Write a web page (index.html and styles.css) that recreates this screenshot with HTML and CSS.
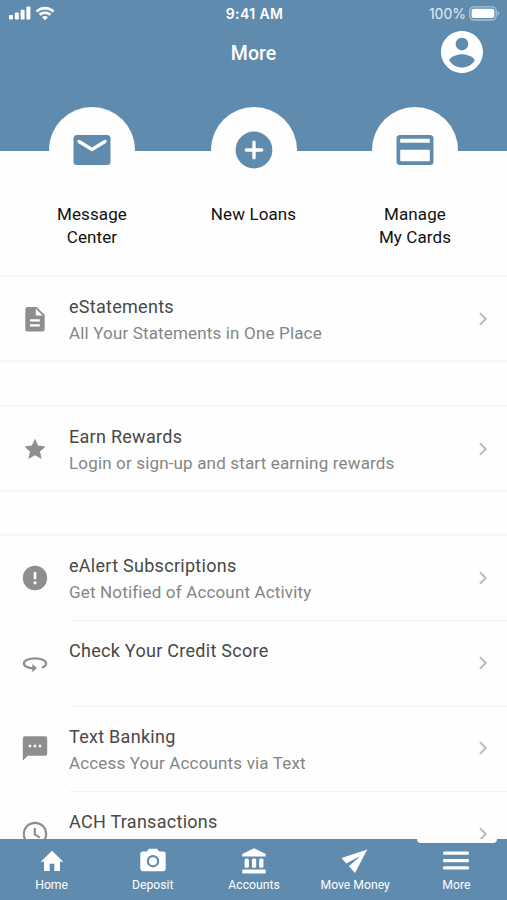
FILE: index.html
```html
<!DOCTYPE html>
<html lang="en">
<head>
  <meta charset="UTF-8">
  <meta name="viewport" content="width=device-width, initial-scale=1.0">
  <title>More</title>
  <link rel="stylesheet" href="styles.css">
</head>
<body>
  <div class="app">
    <!-- Header -->
    <header class="header">
      <div class="status-bar">
        <div class="signal">
          <svg width="22" height="14" viewBox="0 0 22 14"><rect x="0" y="9" width="4" height="4.500" rx="1"/><rect x="5.800" y="6.500" width="4" height="7" rx="1"/><rect x="11.600" y="3.700" width="4" height="9.800" rx="1"/><rect x="17.400" y="0.500" width="4" height="13" rx="1"/></svg>
          <svg class="wifi" width="20" height="15" viewBox="0 0 20 15"><path d="M1.500 5.600a12.200 12.200 0 0 1 17 0M4.600 8.800a7.800 7.800 0 0 1 10.800 0"/><path class="dot" d="M10 14.300l-3-3a4.400 4.400 0 0 1 6 0z"/></svg>
        </div>
        <div class="clock">9:41 AM</div>
        <div class="battery">
          <span>100%</span>
          <svg width="31" height="15" viewBox="0 0 31 15"><rect class="case" x="0.800" y="0.800" width="26.400" height="13.200" rx="4"/><rect x="2.600" y="2.800" width="22.800" height="9.200" rx="2"/><path class="tip" d="M28.600 5.200c2 .7 2 3.700 0 4.400z"/></svg>
        </div>
      </div>
      <div class="title-bar">
        <h1>More</h1>
        <svg class="avatar" viewBox="2 2 20 20"><path d="M12 2C6.480 2 2 6.480 2 12s4.480 10 10 10 10-4.480 10-10S17.520 2 12 2zm0 3.200c1.660 0 3 1.340 3 3s-1.340 3-3 3-3-1.340-3-3 1.340-3 3-3zm0 14.200c-2.500 0-4.710-1.280-6-3.220.030-1.990 4-3.080 6-3.080 1.990 0 5.970 1.090 6 3.080-1.290 1.940-3.500 3.220-6 3.220z"/></svg>
      </div>
    </header>

    <!-- Quick actions -->
    <div class="quick-actions">
      <div class="quick">
        <div class="circle">
          <svg width="44" height="44" viewBox="0 0 44 44"><rect x="3.500" y="7" width="37" height="30" rx="3.500"/><path class="line-white" d="M9 13.500L22 21.500L35 13.500"/></svg>
        </div>
        <p>Message<br>Center</p>
      </div>
      <div class="quick">
        <div class="circle">
          <svg width="44" height="44" viewBox="0 0 44 44"><circle cx="22" cy="22" r="18.400"/><path class="line-white" d="M22 14.300V29.700M14.300 22H29.700"/></svg>
        </div>
        <p>New Loans</p>
      </div>
      <div class="quick">
        <div class="circle">
          <svg width="44" height="44" viewBox="0 0 44 44"><path fill-rule="evenodd" d="M7 7H37a3.500 3.500 0 0 1 3.500 3.500V33.500a3.500 3.500 0 0 1-3.500 3.500H7a3.500 3.500 0 0 1-3.500-3.500V10.500A3.500 3.500 0 0 1 7 7zM7.200 10.700V14.800H36.800V10.700zM7.200 21.800V32.200a1 1 0 0 0 1 1H35.800a1 1 0 0 0 1-1V21.800z"/></svg>
        </div>
        <p>Manage<br>My Cards</p>
      </div>
    </div>

    <!-- Menu list -->
    <main class="menu">
      <section class="group">
        <div class="row">
          <svg class="row-icon" viewBox="0 0 28 28"><path fill-rule="evenodd" d="M7 2h8.700l8 8v14a2.500 2.500 0 0 1-2.500 2.500H6.800A2.500 2.500 0 0 1 4.300 24V4.500A2.500 2.500 0 0 1 6.800 2zM14.800 3.800v6.800h6.800zM9 14.200v2.200h9.800v-2.200zM9 19.200v2.200h9.800v-2.200z"/></svg>
          <div class="row-text"><h2>eStatements</h2><p>All Your Statements in One Place</p></div>
          <svg class="chevron" viewBox="0 0 10 14"><path d="M2 1.200L7.700 7L2 12.800"/></svg>
        </div>
      </section>

      <section class="group">
        <div class="row">
          <svg class="row-icon" viewBox="0 0 28 28"><path d="M14 3.700l3.100 6.900 7.500.8-5.600 5.100 1.600 7.400-6.600-3.700-6.600 3.700L9 16.500l-5.600-5.100 7.500-.8z"/></svg>
          <div class="row-text"><h2>Earn Rewards</h2><p>Login or sign-up and start earning rewards</p></div>
          <svg class="chevron" viewBox="0 0 10 14"><path d="M2 1.200L7.700 7L2 12.800"/></svg>
        </div>
      </section>

      <section class="group list">
        <div class="row">
          <svg class="row-icon" viewBox="0 0 28 28"><path fill-rule="evenodd" d="M14 1.800a12.200 12.200 0 1 1 0 24.400a12.200 12.200 0 1 1 0-24.400zM12.700 8v7.300h2.600V8zM12.700 17.600v2.600h2.600v-2.600z"/></svg>
          <div class="row-text"><h2>eAlert Subscriptions</h2><p>Get Notified of Account Activity</p></div>
          <svg class="chevron" viewBox="0 0 10 14"><path d="M2 1.200L7.700 7L2 12.800"/></svg>
        </div>
        <div class="row">
          <svg class="row-icon" viewBox="0 0 28 28"><path class="outline" d="M20.800 18.600C23.800 17.700 25.100 16.300 25.100 14.500C25.100 11.500 20.100 9.300 14 9.300S2.900 11.500 2.900 14.500C2.900 17 6.800 19 12 19.400"/><path d="M11.300 15l4.700 4.100-4.700 4.200z"/></svg>
          <div class="row-text"><h2>Check Your Credit Score</h2></div>
          <svg class="chevron" viewBox="0 0 10 14"><path d="M2 1.200L7.700 7L2 12.800"/></svg>
        </div>
        <div class="row">
          <svg class="row-icon" viewBox="0 0 28 28"><path fill-rule="evenodd" d="M4 2.200h20a2.200 2.200 0 0 1 2.200 2.200v15.200a2.200 2.200 0 0 1-2.200 2.200H6.700l-4.900 4.800V4.400A2.200 2.200 0 0 1 4 2.200zM7.700 10.800v2.500h2.500v-2.500zM12.700 10.800v2.500h2.500v-2.500zM17.700 10.800v2.500h2.500v-2.500z"/></svg>
          <div class="row-text"><h2>Text Banking</h2><p>Access Your Accounts via Text</p></div>
          <svg class="chevron" viewBox="0 0 10 14"><path d="M2 1.200L7.700 7L2 12.800"/></svg>
        </div>
        <div class="row">
          <svg class="row-icon" viewBox="0 0 28 28"><path class="outline" d="M14 2.800a11.200 11.200 0 1 1 0 22.400a11.200 11.200 0 1 1 0-22.400zM13.800 8v6.400l5 3.200"/></svg>
          <div class="row-text"><h2>ACH Transactions</h2></div>
          <svg class="chevron" viewBox="0 0 10 14"><path d="M2 1.200L7.700 7L2 12.800"/></svg>
        </div>
      </section>
    </main>

    <!-- Bottom navigation -->
    <nav class="tab-bar">
      <div class="tab">
        <svg viewBox="0 0 28 28"><path d="M14 3.700L2.700 14.700H6V24h5.700v-7.300h4.600V24H22v-9.300h3.300z"/></svg>
        <span>Home</span>
      </div>
      <div class="tab">
        <svg viewBox="0 0 28 28"><path fill-rule="evenodd" d="M10 1.800h8l2.300 2.700h4a2.400 2.400 0 0 1 2.400 2.400v14.900a2.400 2.400 0 0 1-2.400 2.400H3.700a2.400 2.400 0 0 1-2.400-2.400V6.900a2.400 2.400 0 0 1 2.400-2.400h4zM14 8a6.200 6.200 0 1 0 0 12.400A6.200 6.200 0 1 0 14 8z"/><circle cx="14" cy="14.200" r="4"/></svg>
        <span>Deposit</span>
      </div>
      <div class="tab">
        <svg viewBox="0 0 28 28"><path d="M14 1.200L2.200 7V9.600h23.600V7z"/><rect x="4.600" y="11.600" width="4.300" height="9.200" rx="1.500"/><rect x="11.900" y="11.600" width="4.300" height="9.200" rx="1.500"/><rect x="19.200" y="11.600" width="4.300" height="9.200" rx="1.500"/><rect x="2.200" y="22.600" width="23.600" height="3.800" rx="1.200"/></svg>
        <span>Accounts</span>
      </div>
      <div class="tab">
        <svg viewBox="0 0 28 28"><path d="M26.300 2.400L0.500 11.100L5.300 16.600L19.300 8.900L7.900 19.200L14 26z"/></svg>
        <span>Move Money</span>
      </div>
      <div class="tab active">
        <svg viewBox="0 0 28 28"><rect x="1" y="4.500" width="26" height="3.200" rx="1.300"/><rect x="1" y="12" width="26" height="3.200" rx="1.300"/><rect x="1" y="19.300" width="26" height="3.200" rx="1.300"/></svg>
        <span>More</span>
      </div>
    </nav>
  </div>
</body>
</html>
```
FILE: styles.css
```css
/* Base styles */
* {
  box-sizing: border-box;
  margin: 0;
  padding: 0;
}

body {
  font-family: Roboto, Arial, sans-serif;
  background-color: #fefefe;
  color: #111;
}

svg {
  display: block;
  flex-shrink: 0;
}

.app {
  height: 900px;
  display: flex;
  flex-direction: column;
  overflow: hidden;
}

/* Header */
.header {
  height: 151px;
  flex-shrink: 0;
  background-color: #5f8bae;
  color: #fff;
  fill: #fff;
}

.status-bar {
  display: grid;
  grid-template-columns: 1fr auto 1fr;
  align-items: center;
  height: 27px;
  padding: 0 7px 0 9px;
  font-family: Inter, sans-serif;
  font-size: 14px;
}

.signal {
  display: flex;
  gap: 4px;
}

.wifi {
  fill: none;
  stroke: #fff;
  stroke-width: 2.6;
}

.wifi .dot {
  fill: #fff;
  stroke: none;
}

.clock {
  font-weight: 600;
  letter-spacing: 0.4px;
}

.battery {
  display: flex;
  justify-content: flex-end;
  align-items: center;
  gap: 3px;
  color: #e4edf4;
}

.battery .case {
  fill: none;
  stroke: #a9c2d5;
  stroke-width: 1.3;
}

.battery .tip {
  fill: #a9c2d5;
}

.title-bar {
  display: grid;
  grid-template-columns: 1fr auto 1fr;
  align-items: center;
  height: 50px;
  padding: 0 24px;
}

.title-bar h1 {
  grid-column: 2;
  padding-top: 2px;
  font-size: 19.5px;
  font-weight: 500;
}

.avatar {
  width: 42px;
  height: 42px;
  justify-self: end;
}

/* Quick actions */
.quick-actions {
  display: grid;
  grid-template-columns: repeat(3, 1fr);
  height: 168px;
  flex-shrink: 0;
  margin-top: -44px;
  padding: 0 11.3px;
}

.quick {
  display: flex;
  flex-direction: column;
  align-items: center;
  text-align: center;
  font-size: 17px;
  line-height: 22.5px;
  letter-spacing: 0.1px;
}

.circle {
  display: flex;
  align-items: center;
  justify-content: center;
  width: 86px;
  height: 86px;
  margin-bottom: 10px;
  border-radius: 50%;
  background-color: #fefefe;
  fill: #5f8bae;
}

.line-white {
  fill: none;
  stroke: #fefefe;
  stroke-width: 3.4;
  stroke-linecap: round;
}

/* Menu list */
.menu {
  flex: 1;
  min-height: 0;
  overflow: hidden;
}

.group {
  margin-bottom: 43px;
  border-top: 2px solid #f7f7f7;
  border-bottom: 2px solid #f7f7f7;
}

.row {
  display: flex;
  align-items: center;
  height: 83px;
  padding: 0 19px 0 21px;
}

.row-icon {
  width: 28px;
  height: 28px;
  fill: #8e8e8e;
}

.row-icon .outline {
  fill: none;
  stroke: #8e8e8e;
  stroke-width: 2.2;
}

.row-text {
  flex: 1;
  align-self: stretch;
  margin-left: 20px;
  padding-top: 17px;
  line-height: 26px;
}

.row-text h2 {
  font-size: 18px;
  font-weight: 400;
  letter-spacing: 0.28px;
  color: #484848;
}

.row-text p {
  font-size: 17px;
  letter-spacing: 0.16px;
  color: #858585;
}

.chevron {
  width: 10px;
  height: 14px;
  fill: none;
  stroke: #bdbdbd;
  stroke-width: 2.1;
}

.list {
  margin-top: -1px;
}

.list .row {
  height: 85.4px;
  padding-bottom: 2px;
  background: linear-gradient(#f3f3f3, #f3f3f3) 69px 100% / 100% 1px no-repeat;
}

/* Bottom navigation */
.tab-bar {
  display: grid;
  grid-template-columns: repeat(5, 1fr);
  height: 61px;
  flex-shrink: 0;
  padding-left: 1px;
  background-color: #5f8bae;
  color: #fff;
  fill: #fff;
}

.tab {
  position: relative;
  display: flex;
  flex-direction: column;
  align-items: center;
  padding-top: 8px;
  font-size: 12.2px;
  line-height: 20px;
}

.tab svg {
  width: 28px;
  height: 28px;
}

.tab.active::before {
  content: "";
  position: absolute;
  top: 0;
  left: 11px;
  width: 80px;
  height: 4px;
  border-radius: 0 0 4px 4px;
  background-color: #fefefe;
}
```
